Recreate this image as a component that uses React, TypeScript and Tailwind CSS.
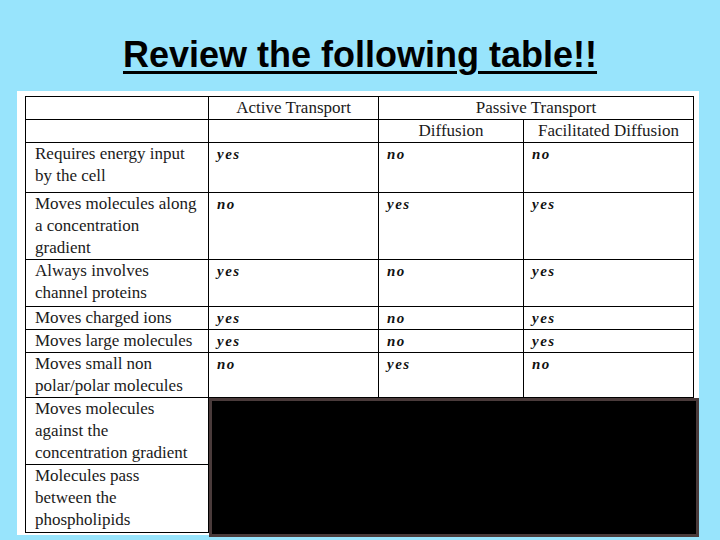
// Review slide — transport comparison table with a masked block over the last rows.
const serif = { fontFamily: '"Liberation Serif", "DejaVu Serif", serif' };

type Row = { label: string[]; h: number; cells: string[] };

const rows: Row[] = [
  { label: ["Requires energy input", "by the cell"], h: 50, cells: ["yes", "no", "no"] },
  { label: ["Moves molecules along", "a concentration", "gradient"], h: 66, cells: ["no", "yes", "yes"] },
  { label: ["Always involves", "channel proteins"], h: 47, cells: ["yes", "no", "yes"] },
  { label: ["Moves charged ions"], h: 22, cells: ["yes", "no", "yes"] },
  { label: ["Moves large molecules"], h: 23, cells: ["yes", "no", "yes"] },
  { label: ["Moves small non", "polar/polar molecules"], h: 45, cells: ["no", "yes", "no"] },
  { label: ["Moves molecules", "against the", "concentration gradient"], h: 65, cells: ["", "", ""] },
  { label: ["Molecules pass", "between the", "phospholipids"], h: 68, cells: ["", "", ""] },
];

function Answer({ v }: { v: string }) {
  if (!v) return null;
  return (
    <span className="italic font-bold text-[15px] tracking-[1.5px] text-[#111]" style={serif}>
      {v}
    </span>
  );
}

export default function App() {
  return (
    <div className="w-[720px] h-[540px] bg-[#98e4fc] overflow-hidden relative">
      <div className="pt-[37px] h-[91px] text-center">
        <h1
          className="inline-block text-[36px] leading-none font-bold underline decoration-[3px] underline-offset-[4px] text-black"
          style={{ fontFamily: '"Liberation Sans", Arial, sans-serif' }}
        >
          Review the following table!!
        </h1>
      </div>

      <div className="ml-[17px] w-[682px] h-[444px] bg-white pt-[5px] pl-[8px] relative">
        <table className="border-collapse text-[17px] leading-[22px] text-[#1a1a1a]" style={serif}>
          <colgroup>
            <col className="w-[183px]" />
            <col className="w-[170px]" />
            <col className="w-[145px]" />
            <col className="w-[170px]" />
          </colgroup>
          <tbody>
            <tr className="h-[22px]">
              <td className="border border-black p-0" />
              <td className="border border-black p-0 text-center align-middle">Active Transport</td>
              <td colSpan={2} className="border border-black p-0 text-center align-middle">
                Passive Transport
              </td>
            </tr>
            <tr className="h-[22px]">
              <td className="border border-black p-0" />
              <td className="border border-black p-0" />
              <td className="border border-black p-0 text-center align-middle">Diffusion</td>
              <td className="border border-black p-0 text-center align-middle">Facilitated Diffusion</td>
            </tr>
            {rows.map((r, i) => (
              <tr key={i} style={{ height: r.h }}>
                <td className="border border-black align-top pl-[9px] py-0 pr-1">
                  {r.label.map((l, j) => (
                    <div key={j} className="whitespace-nowrap">{l}</div>
                  ))}
                </td>
                {r.cells.map((c, j) => (
                  <td key={j} className="border border-black align-top pl-[8px] py-0">
                    <Answer v={c} />
                  </td>
                ))}
              </tr>
            ))}
          </tbody>
        </table>

        <div className="absolute left-[192px] top-[307px] w-[490px] h-[139px] bg-black border-[3px] border-[#4a3b3b]" />
      </div>
    </div>
  );
}
